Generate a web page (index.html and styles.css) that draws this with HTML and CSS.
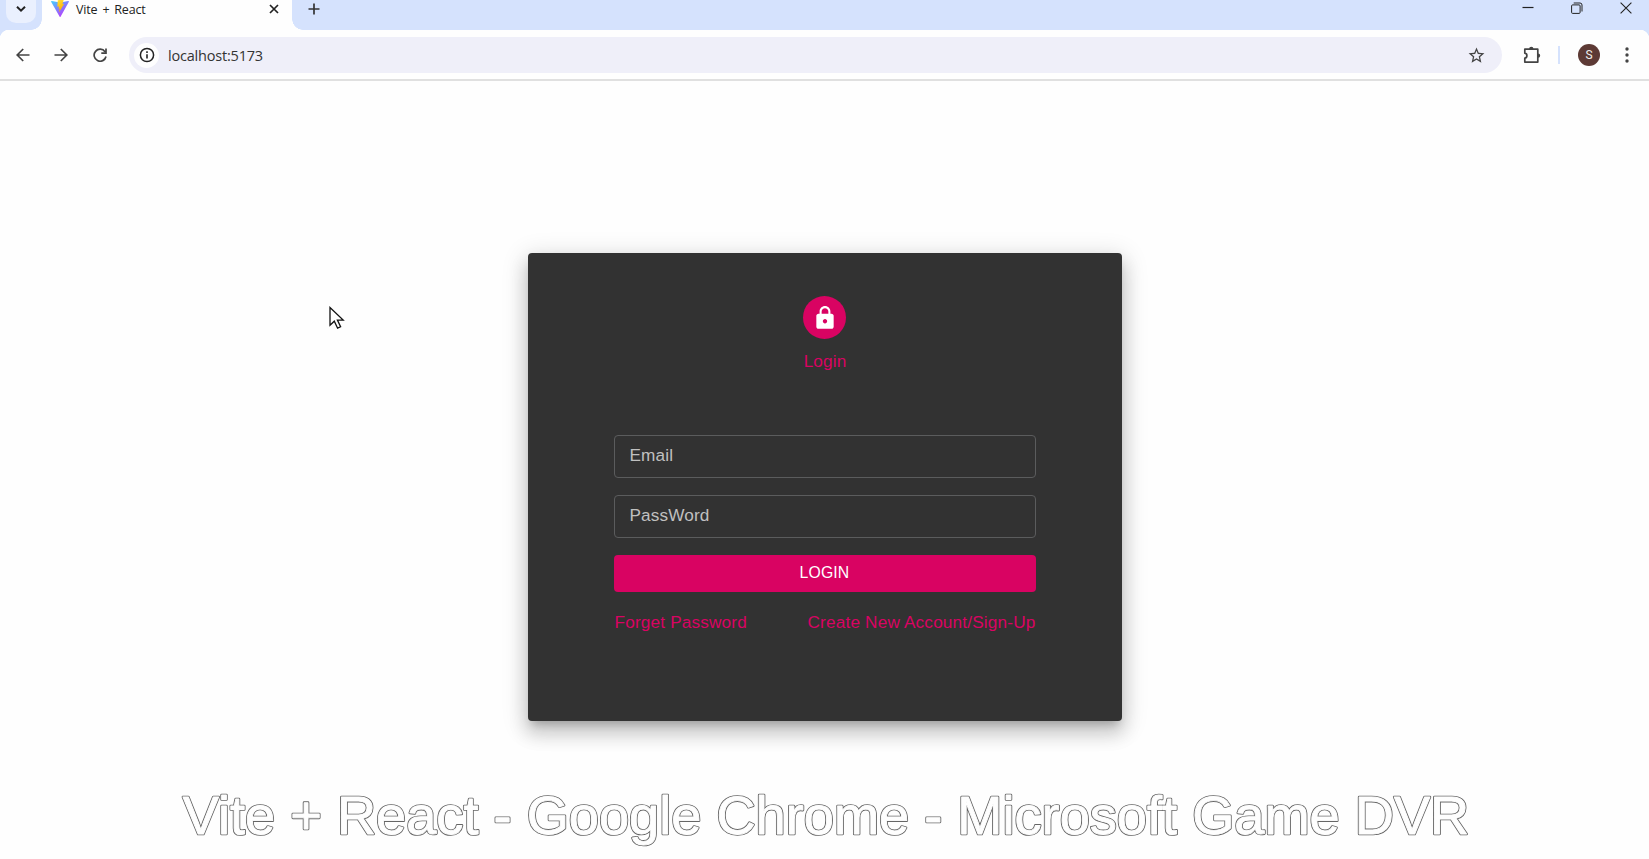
FILE: index.html
```html
<!DOCTYPE html>
<html lang="en">
<head>
<meta charset="utf-8">
<title>Vite + React</title>
<link rel="stylesheet" href="styles.css">
</head>
<body>
<header class="tabstrip">
  <div class="tab-search"><svg width="12" height="8" viewBox="0 0 12 8"><path d="M2 1.700l4 4 4-4" fill="none" stroke="#222" stroke-width="2"/></svg></div>
  <div class="tab">
    <svg class="vite" width="18" height="18" viewBox="0 0 32 32">
      <defs>
        <linearGradient id="g1" x1="0" y1="0" x2="0.7" y2="1"><stop offset="0" stop-color="#41d1ff"/><stop offset="1" stop-color="#bd34fe"/></linearGradient>
        <linearGradient id="g2" x1="0" y1="0" x2="0.2" y2="1"><stop offset="0" stop-color="#ffea83"/><stop offset="0.1" stop-color="#ffdd35"/><stop offset="1" stop-color="#ffa800"/></linearGradient>
      </defs>
      <path d="M31.800 5L17 31.400a1 1 0 0 1-1.600 0L.2 5A1 1 0 0 1 1.300 3.600L16 6.200 30.700 3.600A1 1 0 0 1 31.800 5z" fill="url(#g1)"/>
      <path d="M23 .2L12 2.300l-.7 11.600 3-.7-.9 4.200 2-.6-1.300 7.200L23.500 8.600l-3.200.7z" fill="url(#g2)"/>
    </svg>
    <span class="tab-title">Vite + React</span>
    <svg class="tab-close" width="10" height="10" viewBox="0 0 10 10"><path d="M1 1l8 8M9 1l-8 8" stroke="#222" stroke-width="1.700"/></svg>
  </div>
  <svg class="new-tab" width="12" height="12" viewBox="0 0 12 12"><path d="M6 .5v11M.5 6h11" stroke="#333" stroke-width="1.700"/></svg>
  <div class="window-buttons">
    <svg width="12" height="12" viewBox="0 0 12 12"><path d="M.5 5.500h11" stroke="#222" stroke-width="1.200"/></svg>
    <svg width="12" height="12" viewBox="0 0 12 12" fill="none" stroke="#222"><rect x=".6" y="2.900" width="8.500" height="8.500" rx="1"/><path d="M2.700 1h6.300a2 2 0 0 1 2 2v6.500"/></svg>
    <svg width="12" height="12" viewBox="0 0 12 12"><path d="M.6.600l10.800 10.800M11.400.600L.6 11.400" stroke="#222" stroke-width="1.100"/></svg>
  </div>
</header>
<nav class="toolbar">
  <svg class="back" width="14" height="14" viewBox="0 0 14 14"><path d="M13.500 7H1.500M7.200 1L1.200 7l6 6" fill="none" stroke="#444" stroke-width="1.700"/></svg>
  <svg class="forward" width="14" height="14" viewBox="0 0 14 14"><path d="M.5 7h12M6.800 1l6 6-6 6" fill="none" stroke="#444" stroke-width="1.700"/></svg>
  <svg class="reload" width="14" height="14" viewBox="0 0 14 14"><path d="M12 3.700A6 6 0 1 0 13 8.500M13 .5v4.700H8.300" fill="none" stroke="#444" stroke-width="1.700"/></svg>
  <div class="address">
    <span class="site-info"><svg width="16" height="16" viewBox="0 0 16 16"><circle cx="8" cy="8" r="6.600" fill="none" stroke="#222" stroke-width="1.500"/><path d="M8 7.200v4.200M8 4.300v1.700" stroke="#222" stroke-width="1.600"/></svg></span>
    <span class="url">localhost:5173</span>
    <svg class="star" width="19" height="19" viewBox="0 0 24 24"><path d="M22 9.240l-7.190-.62L12 2 9.190 8.630 2 9.240l5.460 4.730L5.820 21 12 17.270 18.180 21l-1.630-7.030L22 9.240zM12 15.400l-3.760 2.270 1-4.280-3.320-2.880 4.380-.38L12 6.100l1.710 4.040 4.380.38-3.320 2.880 1 4.280L12 15.400z" fill="#444"/></svg>
  </div>
  <svg class="extensions" width="19" height="18" viewBox="0 0 19 18"><path d="M1.800 3.200h13v12.900h-13v-3.900c2.800-.4 2.800-4.500 0-5z" fill="none" stroke="#444" stroke-width="1.700" stroke-linejoin="round"/><path d="M6.100 3a2.200 2.200 0 0 1 4.400 0zM15 7.400a2.200 2.200 0 0 1 0 4.400z" fill="#444"/></svg>
  <span class="divider"></span>
  <span class="profile">S</span>
  <svg class="menu" width="4" height="16" viewBox="0 0 4 16" fill="#444"><circle cx="2" cy="2" r="1.700"/><circle cx="2" cy="8" r="1.700"/><circle cx="2" cy="14" r="1.700"/></svg>
</nav>
<main class="page">
  <form class="card">
    <div class="avatar"><svg width="26" height="26" viewBox="0 0 24 24"><path d="M18 8h-1V6c0-2.760-2.240-5-5-5S7 3.240 7 6v2H6c-1.100 0-2 .9-2 2v10c0 1.100.9 2 2 2h12c1.100 0 2-.9 2-2V10c0-1.100-.9-2-2-2zm-6 9c-1.100 0-2-.9-2-2s.9-2 2-2 2 .9 2 2-.9 2-2 2zm3.100-9H8.900V6c0-1.710 1.390-3.100 3.100-3.100s3.100 1.390 3.100 3.100v2z" fill="#fff"/></svg></div>
    <div class="heading">Login</div>
    <div class="field">Email</div>
    <div class="field">PassWord</div>
    <div class="submit">LOGIN</div>
    <div class="links"><a>Forget Password</a><a>Create New Account/Sign-Up</a></div>
  </form>
  <svg class="caption" width="1400" height="70" viewBox="0 0 1400 70">
    <defs><text id="caption" x="701" y="48.500" text-anchor="middle">Vite + React - Google Chrome - Microsoft Game DVR</text></defs>
    <use href="#caption" class="caption-outline"/>
    <use href="#caption" class="caption-face"/>
  </svg>
</main>
<svg class="cursor" width="16" height="24" viewBox="0 0 16 24"><path d="M1 1.500v17.800l4.300-4.100 3.300 7 3-1.400-3.200-6.700h5.800z" fill="#fff" stroke="#111" stroke-width="1.300"/></svg>
</body>
</html>
```
FILE: styles.css
```css
* { box-sizing: border-box; }
body {
  margin: 0;
  width: 1649px;
  height: 859px;
  overflow: hidden;
  display: flex;
  flex-direction: column;
  background: #fefefe;
  font-family: "Liberation Sans", Arial, sans-serif;
}
svg { display: block; flex: none; }

.tabstrip {
  display: flex;
  height: 30px;
  background: #d5e2fd;
}
.tab-search {
  width: 30px;
  height: 23px;
  margin: 0 6px;
  padding: 5px 0 0 9px;
  border-radius: 0 0 10px 10px;
  background: #eaf0fe;
}
.tab {
  position: relative;
  display: flex;
  width: 250px;
  height: 30px;
  padding-left: 9px;
  background: #fefefe;
}
.tab::before, .tab::after {
  content: "";
  position: absolute;
  bottom: 0;
  width: 11px;
  height: 11px;
}
.tab::before { left: -11px; background: radial-gradient(circle at 0 0, transparent 10.5px, #fefefe 11px); }
.tab::after { right: -11px; background: radial-gradient(circle at 100% 0, transparent 10.5px, #fefefe 11px); }
.vite { margin-top: -1px; }
.tab-title {
  width: 193px;
  margin-left: 7px;
  font: 12.5px/19px "Open Sans", "Noto Sans", sans-serif;
  letter-spacing: -.15px;
  word-spacing: 1.8px;
  color: #222;
}
.tab-close { margin-top: 4px; }
.new-tab { margin: 3px 0 0 16px; }
.window-buttons {
  display: flex;
  gap: 37px;
  margin: 2px 17px 0 auto;
}

.toolbar {
  display: flex;
  align-items: center;
  height: 51px;
  padding: 1px 20px 0 16px;
  border-bottom: 2px solid #e0e0e0;
  background:
    radial-gradient(circle at 9px 9px, #fefefe 9px, #d5e2fd 9.5px) 0 0 / 9px 9px no-repeat,
    radial-gradient(circle at 0 9px, #fefefe 9px, #d5e2fd 9.5px) 100% 0 / 9px 9px no-repeat,
    #fefefe;
}
.forward { margin-left: 24px; }
.reload { margin-left: 25px; }
.address {
  display: flex;
  align-items: center;
  width: 1373px;
  height: 36px;
  margin-left: 22px;
  padding: 0 16px 0 5px;
  border-radius: 18px;
  background: #efeff9;
}
.site-info {
  display: grid;
  place-items: center;
  width: 25px;
  height: 25px;
  border-radius: 50%;
  background: #fefefe;
}
.url {
  margin: 1px 0 0 9px;
  font: 14.5px/24px "Open Sans", "Noto Sans", sans-serif;
  letter-spacing: -.2px;
  color: #333;
}
.star { margin-left: auto; }
.extensions { margin-left: 21px; }
.divider { width: 2px; height: 18px; margin-left: 16px; background: #d5e2fd; }
.profile {
  width: 22px;
  height: 22px;
  margin: 0 25px 0 18px;
  border-radius: 50%;
  background: #5d3a35;
  color: #eee;
  font: 12px/22px Roboto, sans-serif;
  text-align: center;
}

.page {
  display: flex;
  flex-direction: column;
  align-items: center;
  padding-top: 172px;
}
.card {
  display: flex;
  flex-direction: column;
  align-items: center;
  width: 594px;
  height: 468px;
  padding: 43px 86px;
  border-radius: 4px;
  background: #323232;
  box-shadow: 0 7px 8px -4px rgba(0, 0, 0, .2), 0 12px 18px 2px rgba(0, 0, 0, .14), 0 5px 24px 4px rgba(0, 0, 0, .12);
  font-size: 17.2px;
  letter-spacing: .13px;
}
.avatar {
  display: grid;
  place-items: center;
  width: 43px;
  height: 43px;
  border-radius: 50%;
  background: #d90362;
}
.heading { height: 26px; margin: 9px 0 61px; padding-left: 1px; line-height: 26px; color: #d90362; }
.field {
  width: 422px;
  height: 43px;
  margin-bottom: 17px;
  padding-left: 15px;
  border: 1px solid #5b5c5d;
  border-radius: 4px;
  line-height: 39px;
  color: #c0c0c0;
}
.submit {
  width: 422px;
  height: 37px;
  border-radius: 4px;
  background: #d90362;
  color: #fff;
  font-size: 15.8px;
  line-height: 36px;
  text-align: center;
}
.links {
  display: flex;
  justify-content: space-between;
  width: 422px;
  margin-top: 17px;
  padding-left: 1px;
  line-height: 26px;
  letter-spacing: .17px;
  color: #d90362;
  white-space: nowrap;
}
.caption {
  margin-top: 64px;
  font-size: 54.2px;
  stroke-linejoin: round;
}
.caption-outline { fill: #666; stroke: #666; stroke-width: 2.7px; }
.caption-face { fill: #fefefe; stroke: #fefefe; stroke-width: .9px; }
.cursor { position: absolute; left: 329px; top: 306px; }
```
